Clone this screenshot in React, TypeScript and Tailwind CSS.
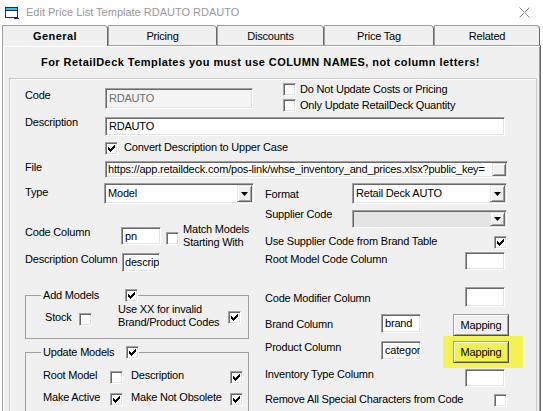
import React from "react";

function Check({ checked = false, className = "" }: { checked?: boolean; className?: string }) {
  return (
    <div
      className={`w-[13px] h-[13px] shrink-0 bg-white border border-t-[#a0a0a0] border-l-[#a0a0a0] border-r-white border-b-white shadow-[inset_1px_1px_0_#696969,inset_-1px_-1px_0_#e3e3e3] flex items-center justify-center ${className}`}
    >
      {checked && (
        <svg width="7" height="7" viewBox="0 0 7 7" shapeRendering="crispEdges" className="block">
          {[2, 3, 4, 3, 2, 1, 0].map((y, x) => (
            <rect key={x} x={x} y={y} width="1" height="3" fill="#000" />
          ))}
        </svg>
      )}
    </div>
  );
}

function Field({ className = "", value = "", disabled = false }: { className?: string; value?: string; disabled?: boolean }) {
  return (
    <div
      className={`shrink-0 flex items-center overflow-hidden whitespace-nowrap border border-t-[#a0a0a0] border-l-[#a0a0a0] border-r-white border-b-white shadow-[inset_1px_1px_0_#696969,inset_-1px_-1px_0_#e3e3e3] ${
        disabled ? "bg-[#f4f4f4] text-[#6d6d6d]" : "bg-white text-black"
      } ${className}`}
    >
      {value}
    </div>
  );
}

function DropBtn() {
  return (
    <div className="w-[15px] shrink-0 bg-[#f0f0f0] border border-t-[#e3e3e3] border-l-[#e3e3e3] border-r-[#696969] border-b-[#696969] shadow-[inset_1px_1px_0_#fff,inset_-1px_-1px_0_#a0a0a0] flex items-center justify-center">
      <svg width="7" height="4" viewBox="0 0 7 4" className="block">
        <path d="M0 0h7L3.5 4z" fill="#000" />
      </svg>
    </div>
  );
}

function Combo({ className = "", value = "", disabled = false }: { className?: string; value?: string; disabled?: boolean }) {
  return (
    <div
      className={`shrink-0 flex p-[1px] border border-t-[#a0a0a0] border-l-[#a0a0a0] border-r-white border-b-white shadow-[inset_1px_1px_0_#696969,inset_-1px_-1px_0_#e3e3e3] ${
        disabled ? "bg-[#e4e4e4]" : "bg-white"
      } ${className}`}
    >
      <div className="flex-1 flex items-center pl-[2px] whitespace-nowrap overflow-hidden">{value}</div>
      <DropBtn />
    </div>
  );
}

function Btn({ className = "", children }: { className?: string; children?: React.ReactNode }) {
  return (
    <div
      className={`shrink-0 flex items-center justify-center border border-t-[#a0a0a0] border-l-[#a0a0a0] border-r-[#505050] border-b-[#505050] shadow-[inset_1px_1px_0_#fff,inset_-1px_-1px_0_#a0a0a0] ${className}`}
    >
      {children}
    </div>
  );
}

function Tab({ className = "", label, selected = false }: { className?: string; label: string; selected?: boolean }) {
  return (
    <div
      className={`shrink-0 flex items-center justify-center bg-[#f0f0f0] border-t border-l border-r border-t-[#a0a0a0] border-l-[#a0a0a0] border-r-[#696969] rounded-tr-[4px] rounded-tl-[1px] ${
        selected ? "h-[21px] -mb-[1px] relative z-10 font-bold tracking-[0.45px]" : "h-[20px]"
      } ${className}`}
    >
      <span className="mt-[1px]">{label}</span>
    </div>
  );
}

export default function App() {
  return (
    <div className="w-[543px] h-[411px] overflow-hidden bg-white flex flex-col font-['Liberation_Sans',Arial,sans-serif] text-[11px] leading-[13px] tracking-[-0.2px] text-black">
      {/* Title bar */}
      <div className="h-[25px] shrink-0 flex items-center bg-white">
        <svg width="14" height="12" viewBox="0 0 14 12" className="ml-[5px] block" shapeRendering="crispEdges">
          <rect x="0.5" y="0.5" width="12" height="10" fill="#fff" stroke="#1d2f5e" />
          <rect x="1" y="1" width="11" height="2" fill="#27c3f2" />
          <rect x="1" y="3" width="11" height="1" fill="#1d2f5e" />
          <rect x="9" y="10" width="3" height="2" fill="#1d2f5e" />
          <rect x="12" y="11" width="2" height="1" fill="#1d2f5e" />
        </svg>
        <span className="ml-[7px] text-[#999999] tracking-normal">Edit Price List Template RDAUTO RDAUTO</span>
        <svg width="11" height="11" viewBox="0 0 11 11" className="ml-auto mr-[13px] block">
          <path d="M0.5 0.5L10.5 10.5M10.5 0.5L0.5 10.5" stroke="#8d8d8d" strokeWidth="1" />
        </svg>
      </div>

      {/* Tabs */}
      <div className="h-[20px] shrink-0 flex items-end pl-[2px] bg-white">
        <Tab className="w-[106px]" label="General" selected />
        <Tab className="w-[109px]" label="Pricing" />
        <Tab className="w-[107px]" label="Discounts" />
        <Tab className="w-[110px]" label="Price Tag" />
        <Tab className="w-[106px]" label="Related" />
      </div>

      {/* Panel */}
      <div className="ml-[2px] w-[539px] flex-1 bg-[#f0f0f0] border-t border-l border-r border-t-[#a0a0a0] border-l-[#a0a0a0] border-r-[#696969] shadow-[inset_1px_1px_0_#fff,inset_-1px_0_0_#a0a0a0] flex flex-col">
        <div className="h-[32px] shrink-0 pt-[10px] pl-[38px] font-bold tracking-[0.45px] whitespace-nowrap">
          For RetailDeck Templates you must use COLUMN NAMES, not column letters!
        </div>

        {/* Main group box */}
        <div className="ml-[6px] w-[528px] flex-1 border-t border-l border-r border-[#c8c8c8] shadow-[inset_1px_1px_0_#fff] flex flex-col">
          {/* Code row */}
          <div className="flex mt-[3px] h-[34px] shrink-0">
            <span className="ml-[15px] w-[80px] mt-[7px]">Code</span>
            <Field className="w-[148px] h-[21px] mt-[6px] pl-[3px]" value="RDAUTO" disabled />
            <div className="ml-[30px] mt-[1px] flex flex-col gap-[3px]">
              <div className="flex items-center h-[13px]">
                <Check />
                <span className="ml-[4px]">Do Not Update Costs or Pricing</span>
              </div>
              <div className="flex items-center h-[13px]">
                <Check />
                <span className="ml-[4px]">Only Update RetailDeck Quantity</span>
              </div>
            </div>
          </div>

          {/* Description row */}
          <div className="flex h-[25px] shrink-0">
            <span className="ml-[15px] w-[80px]">Description</span>
            <Field className="w-[400px] h-[19px] mt-[1px] pl-[3px]" value="RDAUTO" />
          </div>

          {/* Convert row */}
          <div className="flex h-[20px] shrink-0">
            <Check checked className="ml-[95px] mt-[1px]" />
            <span className="ml-[6px]">Convert Description to Upper Case</span>
          </div>

          {/* File row */}
          <div className="flex h-[22px] shrink-0">
            <span className="ml-[15px] w-[80px]">File</span>
            <div className="w-[403px] h-[17px] shrink-0 flex items-center bg-white border border-t-[#a0a0a0] border-l-[#a0a0a0] border-r-white border-b-white shadow-[inset_1px_1px_0_#696969,inset_-1px_-1px_0_#e3e3e3]">
              <div className="flex-1 overflow-hidden whitespace-nowrap pl-[2px]">
                https://app.retaildeck.com/pos-link/whse_inventory_and_prices.xlsx?public_key=
              </div>
              <div className="w-[14px] h-[13px] mr-[1px] shrink-0 bg-[#f0f0f0] border border-t-[#e3e3e3] border-l-[#e3e3e3] border-r-[#696969] border-b-[#696969] shadow-[inset_1px_1px_0_#fff,inset_-1px_-1px_0_#a0a0a0]" />
            </div>
          </div>

          {/* Two columns */}
          <div className="flex flex-1">
            {/* Left column */}
            <div className="w-[248px] shrink-0 flex flex-col">
              <div className="flex h-[40px] shrink-0">
                <span className="ml-[15px] w-[79px] mt-[3px]">Type</span>
                <Combo className="w-[150px] h-[21px]" value="Model" />
              </div>

              <div className="flex h-[27px] shrink-0">
                <span className="ml-[15px] w-[96px] mt-[3px]">Code Column</span>
                <Field className="w-[40px] h-[18px] mt-[4px] pl-[3px]" value="pn" />
                <Check className="ml-[5px] mt-[9px]" />
                <span className="ml-[4px]">
                  Match Models
                  <br />
                  Starting With
                </span>
              </div>

              <div className="flex h-[39px] shrink-0">
                <span className="ml-[15px] w-[97px] mt-[3px] whitespace-nowrap">Description Column</span>
                <Field className="w-[38px] h-[19px] mt-[3px] pl-[2px]" value="descrip" />
              </div>

              <fieldset className="ml-[15px] w-[224px] h-[50px] shrink-0 border border-[#a0a0a0]">
                <legend className="ml-[15px] pl-[2px]">
                  <span className="flex items-center h-[13px]">
                    <span>Add Models</span>
                    <Check checked className="ml-[26px]" />
                  </span>
                </legend>
                <div className="flex">
                  <span className="ml-[19px] w-[34px] mt-[9px]">Stock</span>
                  <Check className="mt-[11px]" />
                  <span className="ml-[26px] w-[110px] mt-[1px]">
                    Use XX for invalid
                    <br />
                    Brand/Product Codes
                  </span>
                  <Check checked className="mt-[9px]" />
                </div>
              </fieldset>

              <fieldset className="ml-[15px] mt-[7px] w-[224px] h-[90px] shrink-0 border border-[#a0a0a0]">
                <legend className="ml-[15px] pl-[2px]">
                  <span className="flex items-center h-[13px]">
                    <span>Update Models</span>
                    <Check checked className="ml-[12px]" />
                  </span>
                </legend>
                <div className="flex flex-col mt-[10px]">
                  <div className="flex h-[22px]">
                    <span className="ml-[17px] w-[67px]">Root Model</span>
                    <Check className="mt-[2px]" />
                    <span className="ml-[8px] w-[99px]">Description</span>
                    <Check checked className="mt-[2px]" />
                  </div>
                  <div className="flex h-[22px]">
                    <span className="ml-[17px] w-[67px]">Make Active</span>
                    <Check checked className="mt-[2px]" />
                    <span className="ml-[8px] w-[99px]">Make Not Obsolete</span>
                    <Check checked className="mt-[2px]" />
                  </div>
                </div>
              </fieldset>
            </div>

            {/* Right column */}
            <div className="flex flex-col pl-[7px]">
              <div className="flex h-[25px] shrink-0">
                <span className="w-[87px] mt-[5px]">Format</span>
                <Combo className="w-[155px] h-[21px]" value="Retail Deck AUTO" />
              </div>
              <div className="flex h-[26px] shrink-0">
                <span className="w-[87px]">Supplier Code</span>
                <Combo className="w-[155px] h-[18px] mt-[2px]" disabled />
              </div>
              <div className="flex justify-between w-[242px] h-[18px] shrink-0">
                <span className="mt-[1px]">Use Supplier Code from Brand Table</span>
                <Check checked className="mt-[2px]" />
              </div>
              <div className="flex justify-between w-[240px] h-[35px] shrink-0">
                <span className="mt-[1px]">Root Model Code Column</span>
                <Field className="w-[40px] h-[18px]" />
              </div>
              <div className="flex justify-between w-[240px] h-[27px] shrink-0">
                <span className="mt-[5px]">Code Modifier Column</span>
                <Field className="w-[40px] h-[20px]" />
              </div>
              <div className="flex h-[27px] shrink-0">
                <span className="w-[116px] mt-[4px]">Brand Column</span>
                <Field className="w-[40px] h-[19px] pl-[3px]" value="brand" />
                <Btn className="ml-[32px] w-[56px] h-[22px] bg-[#f0f0f0]">Mapping</Btn>
              </div>
              <div className="flex h-[27px] shrink-0">
                <span className="w-[116px]">Product Column</span>
                <Field className="w-[40px] h-[19px] pl-[3px]" value="category" />
                <div className="ml-[22px] -mt-[5px] w-[80px] h-[32px] shrink-0 bg-[#f3f352] flex">
                  <Btn className="ml-[10px] mt-[5px] w-[56px] h-[22px] bg-[#f2f24a]">Mapping</Btn>
                </div>
              </div>
              <div className="flex justify-between w-[240px] h-[25px] shrink-0">
                <span>Inventory Type Column</span>
                <Field className="w-[40px] h-[18px] mt-[1px]" />
              </div>
              <div className="flex justify-between w-[242px] shrink-0">
                <span>Remove All Special Characters from Code</span>
                <Check className="mt-[1px]" />
              </div>
            </div>
          </div>
        </div>
      </div>
    </div>
  );
}
